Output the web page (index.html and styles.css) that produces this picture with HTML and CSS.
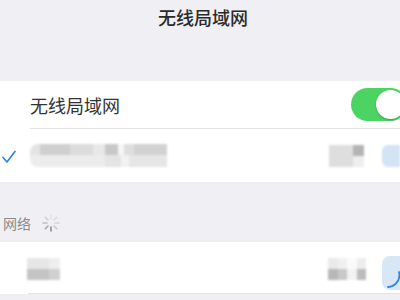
FILE: index.html
```html
<!DOCTYPE html>
<html lang="zh">
<head>
<meta charset="utf-8">
<link rel="stylesheet" href="styles.css">
</head>
<body>
<div class="page">
  <header class="nav"><h1 class="title">无线局域网</h1></header>
  <section class="group">
    <div class="row row-wifi">
      <span class="label">无线局域网</span>
      <span class="toggle"><span class="knob"></span></span>
    </div>
    <div class="row row-current">
      <svg class="check" width="14" height="14" viewBox="0 0 14 14"><path d="M1 7.5 L5 12 L13 1.5" fill="none" stroke="#2f86e0" stroke-width="1.7" stroke-linecap="round" stroke-linejoin="round"/></svg>
      <div class="blur name">
        <div class="cells top"><i class="c1"></i><i class="c2"></i><i class="c3"></i><i class="c4"></i><i class="c5"></i><i class="c6"></i><i class="c7"></i><i class="c8"></i></div>
        <div class="cells bot"><i class="d1"></i><i class="d2"></i><i class="d3"></i><i class="d4"></i></div>
      </div>
      <div class="blur meta">
        <div class="mcol m1"></div>
        <div class="mcol m2"><i class="mt"></i><i class="mb"></i></div>
      </div>
      <div class="info info1"></div>
    </div>
  </section>
  <div class="section-head">
    <span class="head-text">网络</span>
    <svg class="spinner" width="20" height="20" viewBox="0 0 20 20">
      <g stroke-width="1.6" stroke-linecap="round">
        <line x1="10" y1="2" x2="10" y2="6" stroke="#e2e2e6"/>
        <line x1="15.7" y1="4.3" x2="13" y2="7" stroke="#dcdce0"/>
        <line x1="18" y1="10" x2="14" y2="10" stroke="#d4d4d8"/>
        <line x1="15.7" y1="15.7" x2="13" y2="13" stroke="#c8c8cc"/>
        <line x1="10" y1="18" x2="10" y2="14" stroke="#8e8e92"/>
        <line x1="4.3" y1="15.7" x2="7" y2="13" stroke="#a6a6aa"/>
        <line x1="2" y1="10" x2="6" y2="10" stroke="#bebec2"/>
        <line x1="4.3" y1="4.3" x2="7" y2="7" stroke="#d0d0d4"/>
      </g>
    </svg>
  </div>
  <section class="group">
    <div class="row row-net">
      <div class="blur small">
        <div class="sc"><i class="s1"></i><i class="s2"></i></div>
        <div class="sc"><i class="s3"></i><i class="s4"></i></div>
      </div>
      <div class="blur meta2">
        <div class="sc"><i class="t1"></i><i class="t2"></i><i class="t3"></i><i class="t4"></i></div>
        <div class="sc"><i class="u1"></i><i class="u2"></i><i class="u3"></i><i class="u4"></i></div>
      </div>
      <div class="info info2">
        <svg width="20" height="34" viewBox="0 0 20 34"><path d="M17 16 A12 12 0 0 1 6 31" fill="none" stroke="#2f86e0" stroke-width="1.8" stroke-linecap="round"/></svg>
      </div>
    </div>
  </section>
</div>
</body>
</html>
```
FILE: styles.css
```css
* { box-sizing: border-box; margin: 0; padding: 0; }
html, body { width: 400px; height: 300px; overflow: hidden; }
body { background: #efeff4; font-family: "Noto Sans CJK SC", "Noto Sans", sans-serif; color: #222; }
.page { width: 400px; }
.nav { height: 81px; display: flex; justify-content: center; padding-top: 5px; }
.title { font-size: 18px; font-weight: 500; color: #2a2a2a; line-height: 24px; margin-left: 6px; }
.group { background: #fff; }
.row { display: flex; align-items: center; position: relative; }
.row-wifi { height: 48px; padding-left: 30px; }
.row-wifi::after { content: ""; position: absolute; left: 30px; right: 0; bottom: 0; height: 1px; background: #e3e3e6; }
.label { font-size: 18px; color: #333; line-height: 24px; flex: 1; margin-top: -1px; }
.toggle { width: 56px; height: 33px; border-radius: 17px; background: #4cd463; margin-right: -7px; display: flex; align-items: center; justify-content: flex-end; padding-right: 2px; margin-top: -1px; }
.knob { width: 29px; height: 29px; border-radius: 50%; background: #fff; box-shadow: 0 1px 2px rgba(0,0,0,0.25); }
.row-current { height: 53px; padding-left: 2px; }
.check { margin-right: 14px; margin-top: 2px; }
.blur { filter: blur(1.2px); display: flex; }
.name { width: 137px; height: 23px; flex-direction: column; border-radius: 8px 0 0 8px; overflow: hidden; margin-top: -1px; }
.cells { display: flex; flex: 1; }
.cells i { display: block; height: 100%; }
.top .c1 { width: 10px; background: #e4e4e4; }
.top .c2 { width: 30px; background: #cfcfcf; }
.top .c3 { width: 23px; background: #dcdcdc; }
.top .c4 { width: 12px; background: #e8e8e8; }
.top .c5 { width: 13px; background: #c8c8c8; }
.top .c6 { width: 6px; background: #f6f6f6; }
.top .c7 { width: 10px; background: #dedede; }
.top .c8 { flex: 1; background: #d2d2d2; }
.bot .d1 { width: 75px; background: #ececec; }
.bot .d2 { width: 16px; background: #e4e4e4; }
.bot .d3 { width: 8px; background: #f2f2f2; }
.bot .d4 { flex: 1; background: #e6e6e6; }
.meta { margin-left: auto; width: 35px; height: 22px; }
.mcol { height: 100%; }
.m1 { width: 24px; background: #dedede; }
.m2 { width: 11px; display: flex; flex-direction: column; }
.m2 i { display: block; flex: 1; }
.mt { background: #b4b4b4; }
.mb { background: #eeeeee; }
.info { width: 18px; margin-left: 18px; background: #d3e4f6; border-radius: 6px 0 0 6px; }
.info1 { height: 22px; filter: blur(0.8px); }
.section-head { height: 60px; display: flex; align-items: flex-end; padding: 0 0 7px 3px; gap: 10px; }
.head-text { font-size: 14px; color: #8a8a8e; line-height: 20px; margin-bottom: 2px; }
.spinner { margin-bottom: 2px; }
.row-net { height: 52px; padding-left: 27px; }
.row-net::after { content: ""; position: absolute; left: 28px; right: 0; bottom: 0; height: 1px; background: #e3e3e6; }
.small { width: 33px; height: 22px; margin-top: 2px; }
.sc { display: flex; flex-direction: column; height: 100%; }
.sc i { display: block; flex: 1; }
.small .sc:first-child { width: 22px; }
.small .sc:last-child { width: 11px; }
.s1 { background: #e6e6e6; } .s2 { background: #c4c4c4; }
.s3 { background: #eeeeee; } .s4 { background: #d0d0d0; }
.meta2 { margin-left: auto; height: 22px; margin-top: 2px; }
.meta2 .sc { width: 38px; flex-direction: row; }
.meta2 { flex-direction: column; }
.t1 { background: #eaeaea; } .t2 { background: #f0f0f0; } .t3 { background: #fafafa; } .t4 { background: #ededed; }
.u1 { background: #b8b8b8; } .u2 { background: #c8c8c8; } .u3 { background: #f2f2f2; } .u4 { background: #bcbcbc; }
.info2 { height: 34px; margin-top: 10px; margin-left: 16px; background: #d8e7f7; border-radius: 8px 0 0 8px; position: relative; }
.info2 svg { display: block; }
```
